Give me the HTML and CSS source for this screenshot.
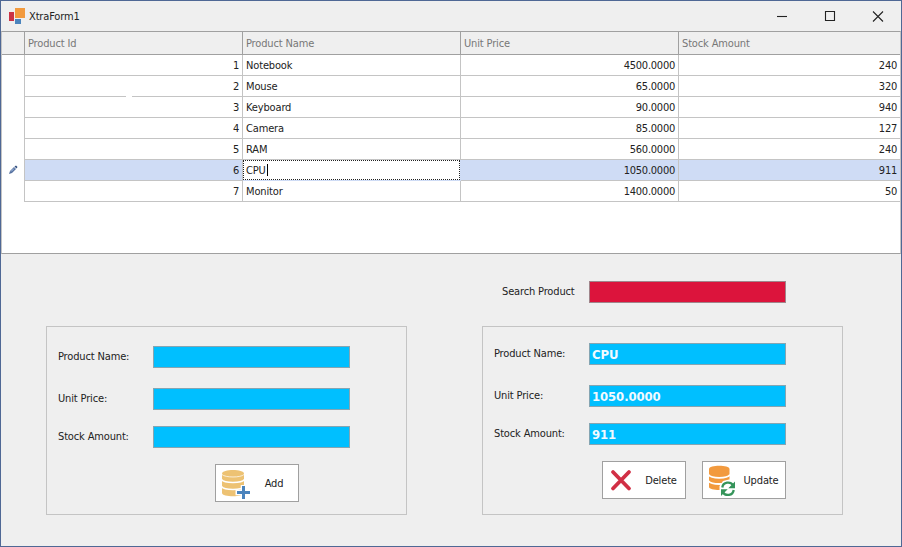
FILE: index.html
```html
<!DOCTYPE html>
<html lang="en">
<head>
<meta charset="utf-8">
<title>XtraForm1</title>
<link rel="stylesheet" href="styles.css">
</head>
<body>
<div class="window">
  <header class="titlebar">
    <svg class="app-icon" width="18" height="18" viewBox="0 0 18 18"><path fill="#cb3245" d="M1 5h5v9H1z"/><path fill="#f29a3e" d="M7 1h10v10H7z"/><path fill="#4b84bd" d="M7 12h6v5H7z"/></svg>
    <span class="title">XtraForm1</span>
    <svg class="control" width="48" height="30" viewBox="0 0 48 30"><path d="M19 15.500h10"/></svg>
    <svg class="control" width="48" height="30" viewBox="0 0 48 30"><path d="M19.500 10.500h9v9h-9z"/></svg>
    <svg class="control" width="48" height="30" viewBox="0 0 48 30"><path d="M19 10.500l10 10M29 10.500l-10 10"/></svg>
  </header>
  <main class="data">
    <div class="row head"><span class="mark"></span><span>Product Id</span><span>Product Name</span><span>Unit Price</span><span>Stock Amount</span></div>
    <div class="row"><span class="mark"></span><span class="num">1</span><span>Notebook</span><span class="num">4500.0000</span><span class="num">240</span></div>
    <div class="row gap"><span class="mark"></span><span class="num">2</span><span>Mouse</span><span class="num">65.0000</span><span class="num">320</span></div>
    <div class="row"><span class="mark"></span><span class="num">3</span><span>Keyboard</span><span class="num">90.0000</span><span class="num">940</span></div>
    <div class="row"><span class="mark"></span><span class="num">4</span><span>Camera</span><span class="num">85.0000</span><span class="num">127</span></div>
    <div class="row"><span class="mark"></span><span class="num">5</span><span>RAM</span><span class="num">560.0000</span><span class="num">240</span></div>
    <div class="row selected"><span class="mark"><svg width="10" height="10" viewBox="0 0 10 10"><path fill="#56719f" d="M1 9l1-3 4-4 2 2-4 4z"/><path fill="#324f80" d="M6.500 1.500L8 .5l1.500 1.500-1 1.500z"/><path stroke="#a9c3e8" d="M3 6.500l3-3"/></svg></span><span class="num">6</span><span class="editing">CPU<i class="caret"></i></span><span class="num">1050.0000</span><span class="num">911</span></div>
    <div class="row"><span class="mark"></span><span class="num">7</span><span>Monitor</span><span class="num">1400.0000</span><span class="num">50</span></div>
  </main>
  <section class="forms">
    <div class="search"><label>Search Product</label><div class="field red"></div></div>
    <div class="panel add">
      <div class="line"><label>Product Name:</label><div class="field"></div></div>
      <div class="line"><label>Unit Price:</label><div class="field"></div></div>
      <div class="line"><label>Stock Amount:</label><div class="field"></div></div>
      <div class="actions">
        <button class="button"><svg width="34" height="36" viewBox="0 0 34 36"><path fill="#edc273" d="M6 8.500c0-4.700 22-4.700 22 0V28c0 4.300-22 4.300-22 0z"/><g fill="none" stroke="#fff"><path stroke-width=".7" d="M6 9.500c3 3.300 19 3.300 22 0"/><path stroke-width="1.400" d="M5.500 14.500c3 4 20 4 23 0M5.500 21.500c3 4 20 4 23 0"/></g><path stroke="#fff" stroke-width="5.500" d="M19.500 27.500H35M27.500 20v15"/><path stroke="#4b84bd" stroke-width="3" d="M21 27.500h13M27.500 21v13"/></svg><span>Add</span></button>
      </div>
    </div>
    <div class="panel edit">
      <div class="line"><label>Product Name:</label><div class="field">CPU</div></div>
      <div class="line"><label>Unit Price:</label><div class="field">1050.0000</div></div>
      <div class="line"><label>Stock Amount:</label><div class="field">911</div></div>
      <div class="actions">
        <button class="button"><svg width="34" height="36" viewBox="0 0 34 36"><path stroke="#d12f45" stroke-width="3.800" stroke-linecap="round" d="M10 10l16 16.500M26 10L10 26.500"/></svg><span>Delete</span></button>
        <button class="button update"><svg width="34" height="36" viewBox="0 0 34 36"><path fill="#f29a3e" d="M6 7c0-4.400 20.500-4.400 20.500 0v18c0 4-20.500 4-20.500 0z"/><path fill="none" stroke="#fff" stroke-width="1.800" d="M5.500 12.800c3 4 18.500 4 21.500 0M5.500 19c3 4 18.500 4 21.500 0"/><path fill="#fff" d="M16.500 35V24l3.500-5 6-1.500h8V35z"/><g fill="none" stroke="#35945a" stroke-width="2.300"><path d="M19.300 25.500c.8-5.800 8.200-6.300 10.700-2.300M30.700 28c-.8 5.800-8.200 6.300-10.700 2.300"/></g><path fill="#35945a" d="M32 19.500v6.700h-6.700zM18 34v-6.700h6.700z"/></svg><span>Update</span></button>
      </div>
    </div>
  </section>
</div>
</body>
</html>
```
FILE: styles.css
```css
* { box-sizing: border-box; }
body {
  margin: 0;
  font: 11px/13px "DejaVu Sans Condensed", "DejaVu Sans", sans-serif;
  letter-spacing: -0.15px;
  color: #222;
}
.window {
  width: 902px;
  height: 547px;
  display: flex;
  flex-direction: column;
  border: 1px solid #4f6895;
  background: #efefef;
}
.titlebar { height: 30px; display: flex; align-items: center; padding-left: 7px; }
.app-icon { margin-right: 3px; }
.title { flex: 1; }
.control { fill: none; stroke: #222; stroke-width: 1.1; }
.control:last-child { margin-right: -1px; }
.data {
  height: 223px;
  background: #fff;
  border: 1px solid #a0a0a0;
  border-left-color: #c4c4c4;
  border-right-color: #c4c4c4;
}
.row { display: grid; grid-template-columns: 23px 218px 218px 218px 1fr; height: 21px; position: relative; }
.row > span {
  padding: 4px 3px 0;
  border-right: 1px solid #c4c4c4;
  border-bottom: 1px solid #c4c4c4;
}
.row > span:last-child { border-right: 0; }
.row > .mark { border-bottom: 0; padding: 5px 0 0 6px; }
.row > .num { text-align: right; letter-spacing: -0.25px; }
.row.head { height: 23px; background: #efefef; color: #777; }
.row.head > span { border-color: #a0a0a0; padding-top: 5px; }
.row.head > .mark { border-bottom: 1px solid #a0a0a0; }
.gap::after {
  content: "";
  position: absolute;
  left: 124px;
  bottom: 0;
  width: 6px;
  height: 1px;
  background: #fff;
}
.selected { background: #cfdcf5; }
.selected .mark, .row > .editing { background: #fff; }
.row > .editing { outline: 1px dotted #222; outline-offset: -1px; margin-right: 1px; border: 0; height: 20px; }
.caret { display: inline-block; width: 1px; height: 12px; background: #000; vertical-align: -2px; margin-left: 1px; }
.forms {
  flex: 1;
  display: grid;
  grid-template-columns: 361px 361px;
  grid-template-rows: 22px 189px;
  column-gap: 75px;
  row-gap: 23px;
  padding: 27px 0 0 45px;
}
.search { grid-column: 2; display: flex; padding-left: 20px; }
.search label { width: 87px; padding-top: 4px; }
.field {
  width: 197px;
  height: 22px;
  padding: 3px 2px;
  background: #00bfff;
  border: 1px solid #85a5b2;
  color: #f2faff;
  font: bold 13px/15px "DejaVu Sans Condensed", "DejaVu Sans", sans-serif;
  letter-spacing: -0.1px;
}
.field.red { background: #dc143c; border-color: #a0858b; }
.panel { border: 1px solid #c4c4c4; padding: 19px 0 0 11px; }
.panel.edit { padding-top: 16px; }
.line { display: flex; margin-bottom: 20px; }
.line:nth-child(2) { margin-bottom: 16px; }
.line:nth-child(3) { margin-bottom: 16px; }
.line label { width: 95px; padding-top: 4px; }
.actions { display: flex; gap: 16px; padding-left: 157px; }
.edit .actions { padding-left: 108px; }
.button {
  width: 84px;
  height: 38px;
  display: flex;
  align-items: center;
  padding: 0;
  border: 1px solid #a0a0a0;
  background: #fff;
  color: #222;
  font: inherit;
  letter-spacing: inherit;
}
.button svg { flex: none; fill: none; }
.button span { flex: 1; text-align: center; }
```
